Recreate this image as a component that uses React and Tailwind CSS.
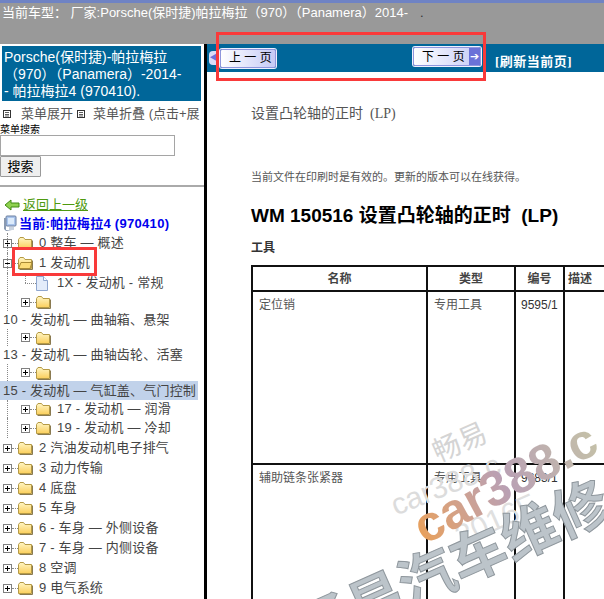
const SANS = "font-['Liberation_Sans','Noto_Sans_CJK_SC',sans-serif]";

const rows = [
  { h: "h-[20px]", box: "plus", x: "pl-[3px]", folder: true, text: "0 整车 — 概述", guide: true },
  { h: "h-[20px]", box: "minus", x: "pl-[3px]", folder: true, text: "1 发动机", open: true, guide: true },
  { h: "h-[20px]", x: "pl-[25px]", doc: true, text: "1X - 发动机 - 常规", guide: true, link: true },
  { h: "h-[18px]", box: "plus", x: "pl-[21px]", folder: true, text: "", guide: true },
  { h: "h-[18px]", x: "pl-[3px]", text: "10 - 发动机 — 曲轴箱、悬架" },
  { h: "h-[17px]", box: "plus", x: "pl-[21px]", folder: true, text: "", guide: true },
  { h: "h-[18px]", x: "pl-[3px]", text: "13 - 发动机 — 曲轴齿轮、活塞" },
  { h: "h-[17px]", box: "plus", x: "pl-[21px]", folder: true, text: "", guide: true },
  { h: "h-[19px]", x: "pl-[3px]", text: "15 - 发动机 — 气缸盖、气门控制", selected: true },
  { h: "h-[18px]", box: "plus", x: "pl-[21px]", folder: true, text: "17 - 发动机 — 润滑", guide: true },
  { h: "h-[20px]", box: "plus", x: "pl-[21px]", folder: true, text: "19 - 发动机 — 冷却", guide: true },
  { h: "h-[20px]", box: "plus", x: "pl-[3px]", folder: true, text: "2 汽油发动机电子排气" },
  { h: "h-[20px]", box: "plus", x: "pl-[3px]", folder: true, text: "3 动力传输" },
  { h: "h-[20px]", box: "plus", x: "pl-[3px]", folder: true, text: "4 底盘" },
  { h: "h-[20px]", box: "plus", x: "pl-[3px]", folder: true, text: "5 车身" },
  { h: "h-[20px]", box: "plus", x: "pl-[3px]", folder: true, text: "6 - 车身 — 外侧设备" },
  { h: "h-[20px]", box: "plus", x: "pl-[3px]", folder: true, text: "7 - 车身 — 内侧设备" },
  { h: "h-[20px]", box: "plus", x: "pl-[3px]", folder: true, text: "8 空调" },
  { h: "h-[20px]", box: "plus", x: "pl-[3px]", folder: true, text: "9 电气系统" },
];

function Box({ type }) {
  if (type === "lines") {
    return (
      <svg width="8" height="8" viewBox="0 0 8 8" className="shrink-0">
        <rect x="0.5" y="0.5" width="7" height="7" fill="#fff" stroke="#333" />
        <path d="M2 2.5h4M2 4.5h4M2 6h4" stroke="#333" strokeWidth="0.8" />
      </svg>
    );
  }
  return (
    <svg width="9" height="9" viewBox="0 0 9 9" className="shrink-0">
      <rect x="0.5" y="0.5" width="8" height="8" fill="#fff" stroke="#808080" />
      <path d="M2 4.5h5" stroke="#000" />
      {type === "plus" && <path d="M4.5 2v5" stroke="#000" />}
    </svg>
  );
}

function Folder({ open }) {
  return (
    <svg width="15" height="14" viewBox="0 0 15 14" className="shrink-0">
      <defs>
        <linearGradient id="folderFill" x1="0" y1="0" x2="0" y2="1">
          <stop offset="0" stopColor="#fff6c4" />
          <stop offset="1" stopColor="#fbcf5c" />
        </linearGradient>
      </defs>
      <path d="M.5 3.5 2 1.5h3.5L7 3.5h6.5v9H.5z" fill="url(#folderFill)" stroke="#b59a45" />
      <path d="M1.5 13.5h13V4.5" fill="none" stroke="#8a7a50" />
      {open && <path d="M.5 12.5 3 6.5h11l-2 6z" fill="#fbdc78" stroke="#a88a35" />}
    </svg>
  );
}

function Doc() {
  return (
    <svg width="12" height="15" viewBox="0 0 12 15" className="shrink-0">
      <path d="M.5.5h7l4 4v10H.5z" fill="#e3ecfa" stroke="#8ea6cf" />
      <path d="M7.5.5v4h4" fill="#fff" stroke="#8ea6cf" />
    </svg>
  );
}

function TreeRow({ row }) {
  return (
    <div className={`relative flex items-center ${row.h} ${row.x} ${row.selected ? "bg-[#c1d2ea] mr-[6px]" : ""}`}>
      {row.guide && <span className="absolute left-[7px] top-0 bottom-0 border-l border-dotted border-[#888]" />}
      {row.link && <span className="absolute left-[25px] top-0 h-[10px] border-l border-dotted border-[#888]" />}
      {row.box && <Box type={row.box} />}
      {row.box && <span className="w-[6px] border-t border-dotted border-[#888] shrink-0" />}
      {row.doc && <span className="w-[11px] border-t border-dotted border-[#888] shrink-0" />}
      {row.folder && <Folder open={row.open} />}
      {row.doc && <Doc />}
      {row.text && (
        <span className={`whitespace-nowrap text-[13px] tracking-[0.2px] text-[#444] ${row.folder ? "ml-[6px]" : row.doc ? "ml-[9px]" : ""}`}>
          {row.text}
        </span>
      )}
    </div>
  );
}

function ArrowBack() {
  return (
    <svg width="16" height="12" viewBox="0 0 16 12" className="shrink-0">
      <path d="M1 6 7 1v3h8v4H7v3z" fill="#8fd14f" stroke="#3f8a12" />
    </svg>
  );
}

function Computer() {
  return (
    <svg width="14" height="17" viewBox="0 0 14 17" className="shrink-0">
      <rect x="3" y="1" width="10" height="10" rx="1" fill="#a9c4ec" stroke="#6b7f9f" />
      <rect x="5" y="3" width="6" height="6" fill="#dcebfb" />
      <path d="M1 3h2v12l6 1H3L1 14z" fill="#8a99b0" />
      <path d="M6 12h5v3H6z" fill="#c9d3e0" />
    </svg>
  );
}

function Sidebar() {
  return (
    <aside className="w-[204px] shrink-0 bg-white overflow-hidden">
      <div className="mx-[2px] mt-[2px] h-[55px] w-[199px] bg-[#006699] px-[2px] pt-[3px] text-[14px] leading-[17px] text-white">
        <div className="whitespace-nowrap">Porsche(保时捷)-帕拉梅拉</div>
        <div className="whitespace-nowrap">（970）（Panamera）-2014-</div>
        <div className="whitespace-nowrap">- 帕拉梅拉4 (970410).</div>
      </div>
      <div className="flex items-center h-[20px] mt-[3px] pl-[3px] text-[13px] text-[#555] whitespace-nowrap">
        <Box type="lines" />
        <span className="ml-[10px]">菜单展开</span>
        <span className="ml-[4px]"><Box type="lines" /></span>
        <span className="ml-[8px]">菜单折叠 (点击+展</span>
      </div>
      <div className="text-[10px] leading-[10px] text-black mt-[1px]">菜单搜索</div>
      <input className="block h-[21px] w-[175px] border border-[#a5a5a5] bg-white" readOnly />
      <button className="block h-[21px] w-[41px] rounded-[1px] border border-[#999] bg-[#efefef] text-[13px] text-black">
        搜索
      </button>
      <div className="mt-[8px] border-t-2 border-[#aaa]" />
      <div className="flex items-center h-[19px] mt-[8px] pl-[4px]">
        <ArrowBack />
        <span className="ml-[3px] text-[13px] text-[#4f9a10] underline">返回上一级</span>
      </div>
      <div className="flex items-center h-[19px] pl-[3px]">
        <Computer />
        <span className="ml-[2px] text-[13px] tracking-[0.3px] font-bold text-[#0000ee] whitespace-nowrap">当前:帕拉梅拉4 (970410)</span>
      </div>
      <div>
        {rows.map((row, i) => (
          <TreeRow key={i} row={row} />
        ))}
      </div>
    </aside>
  );
}

function PageButton({ next }) {
  return (
    <div className="flex items-center h-[19px] rounded-[2px] bg-gradient-to-r from-[#ffffff] to-[#c5caf5] border border-[#8f96dd] shadow-[0_0_0_1px_#eef0ff] text-[12px] text-black">
      {next ? (
        <>
          <span className="w-[55px] pl-[8px] whitespace-nowrap">下 一 页</span>
          <span className="flex h-full w-[11px] items-center justify-center bg-[#6a72d8] text-[11px] leading-none text-white">➔</span>
        </>
      ) : (
        <span className="w-[54px] pl-[8px] whitespace-nowrap">上 一 页</span>
      )}
    </div>
  );
}

function Content() {
  return (
    <main className="flex-1 min-w-0 overflow-hidden">
      <div className="flex items-center h-[28px] bg-[#006699] pl-[2px]">
        <span className="flex h-[14px] w-[9px] items-center justify-center rounded-l-[4px] bg-[#d9ddf8] text-[8px] text-[#6a72d8]">◀</span>
        <span className="ml-[2px]"><PageButton /></span>
        <div className="ml-[137px] -mt-[3px]"><PageButton next /></div>
        <span className="ml-[14px] mt-[8px] text-[13px] tracking-[0.5px] font-bold text-white whitespace-nowrap font-['Liberation_Serif','Noto_Sans_CJK_SC',serif]">[刷新当前页]</span>
      </div>
      <div className="pl-[44px] font-['Liberation_Serif','Noto_Sans_CJK_SC',serif]">
        <p className="mt-[33px] text-[14px] leading-[18px] text-[#555] whitespace-pre">设置凸轮轴的正时  (LP)</p>
        <p className="mt-[46px] text-[11px] leading-[16px] text-[#555] whitespace-nowrap">当前文件在印刷时是有效的。更新的版本可以在线获得。</p>
        <h1 className={`mt-[18px] text-[19px] leading-[26px] font-bold text-black whitespace-pre ${SANS}`}>
          WM 150516 设置凸轮轴的正时  (LP)
        </h1>
        <p className="mt-[11px] text-[12px] font-bold leading-[16px] text-[#333]">工具</p>
        <table className="mt-[9px] w-[420px] table-fixed border-collapse border-2 border-[#111] text-[12px] text-[#555]">
          <colgroup>
            <col className="w-[175px]" />
            <col className="w-[88px]" />
            <col className="w-[49px]" />
            <col />
          </colgroup>
          <thead>
            <tr className="h-[25px] font-bold text-[#444]">
              <th className="border-2 border-[#111]">名称</th>
              <th className="border-2 border-[#111]">类型</th>
              <th className="border-2 border-[#111]">编号</th>
              <th className="border-2 border-[#111] text-left pl-[3px]">描述</th>
            </tr>
          </thead>
          <tbody>
            <tr className="h-[173px] align-top">
              <td className="border-2 border-[#111] pl-[6px] pt-[4px]">定位销</td>
              <td className="border-2 border-[#111] pl-[6px] pt-[4px]">专用工具</td>
              <td className={`border-2 border-[#111] pl-[5px] pt-[4px] text-[#333] ${SANS}`}>9595/1</td>
              <td className="border-2 border-[#111]" />
            </tr>
            <tr className="h-[150px] align-top">
              <td className="border-2 border-[#111] pl-[6px] pt-[4px]">辅助链条张紧器</td>
              <td className="border-2 border-[#111] pl-[6px] pt-[4px]">专用工具</td>
              <td className={`border-2 border-[#111] pl-[5px] pt-[4px] text-[#333] ${SANS}`}>9683/1</td>
              <td className="border-2 border-[#111]" />
            </tr>
          </tbody>
        </table>
      </div>
    </main>
  );
}

function Watermark() {
  return (
    <div className={`absolute inset-0 overflow-hidden pointer-events-none ${SANS}`}>
      <span className="absolute left-[432px] top-[429px] -rotate-[24deg] text-[28px] leading-none text-[#d4d4d4] whitespace-nowrap">畅易</span>
      <span className="absolute left-[388px] top-[470px] -rotate-[22deg] text-[30px] leading-none text-[#dcdcdc] whitespace-nowrap">car388.c</span>
      <span className="absolute left-[453px] top-[505px] -rotate-[24deg] text-[30px] leading-none text-[#e0e0e0] whitespace-nowrap">2016F</span>
      <span className="absolute left-[405px] top-[458px] -rotate-[28deg] text-[50px] leading-none font-bold bg-gradient-to-r from-[#e8a05a] via-[#b9a0b4] to-[#c4c0a8] bg-clip-text text-transparent whitespace-nowrap">car388.c</span>
      <span className="absolute left-[285px] top-[539px] -rotate-[24deg] text-[56px] leading-none font-bold text-[#bcc4ca] [-webkit-text-stroke:1px_#8f979d] whitespace-nowrap">畅易汽车维修</span>
    </div>
  );
}

export default function App() {
  return (
    <div className={`relative h-[599px] w-[604px] overflow-hidden bg-white ${SANS}`}>
      <header className="h-[44px] bg-[#999] border-t-[3px] border-[#6f83c4] text-[13px] leading-[20px] text-white whitespace-pre pl-[2px]">
        当前车型： 厂家:Porsche(保时捷)帕拉梅拉（970）（Panamera）2014-<span className="ml-[12px] text-[#333]">.</span>
      </header>
      <div className="flex h-[555px]">
        <Sidebar />
        <div className="w-[3px] shrink-0 bg-black" />
        <Content />
      </div>
      <Watermark />
      {/* red marks on top of the screenshot */}
      <div className="absolute left-[216px] top-[32px] h-[49px] w-[270px] border-[3px] border-[#f93a3a]" />
      <div className="absolute left-[12px] top-[247px] h-[29px] w-[85px] border-[3px] border-[#f93a3a]" />
    </div>
  );
}
